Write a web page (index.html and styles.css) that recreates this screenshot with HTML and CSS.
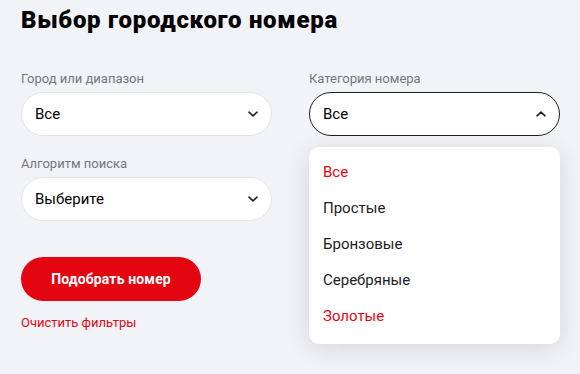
FILE: index.html
```html
<!DOCTYPE html>
<html lang="ru">
<head>
<meta charset="utf-8">
<link rel="stylesheet" href="styles.css">
</head>
<body>
<main class="page">
  <h1 class="title">Выбор городского номера</h1>
  <div class="grid">
    <div class="col">
      <div class="field">
        <div class="label">Город или диапазон</div>
        <div class="select">
          <span>Все</span>
          <svg class="chev" width="10" height="6" viewBox="0 0 10 6"><path d="M1 1.2l4 3.6 4-3.6" fill="none" stroke="#1d2023" stroke-width="1.6" stroke-linecap="round" stroke-linejoin="round"/></svg>
        </div>
      </div>
      <div class="field">
        <div class="label">Алгоритм поиска</div>
        <div class="select">
          <span>Выберите</span>
          <svg class="chev" width="10" height="6" viewBox="0 0 10 6"><path d="M1 1.2l4 3.6 4-3.6" fill="none" stroke="#1d2023" stroke-width="1.6" stroke-linecap="round" stroke-linejoin="round"/></svg>
        </div>
      </div>
      <button class="btn">Подобрать номер</button>
      <a class="clear">Очистить фильтры</a>
    </div>
    <div class="col">
      <div class="field dd-wrap">
        <div class="label">Категория номера</div>
        <div class="select open">
          <span>Все</span>
          <svg class="chev" width="10" height="6" viewBox="0 0 10 6"><path d="M1 4.8l4-3.6 4 3.6" fill="none" stroke="#1d2023" stroke-width="1.6" stroke-linecap="round" stroke-linejoin="round"/></svg>
        </div>
        <ul class="menu">
          <li class="item red">Все</li>
          <li class="item">Простые</li>
          <li class="item">Бронзовые</li>
          <li class="item">Серебряные</li>
          <li class="item red">Золотые</li>
        </ul>
      </div>
    </div>
  </div>
</main>
</body>
</html>
```

FILE: styles.css
```css
* { box-sizing: border-box; }
html, body {
  margin: 0;
  padding: 0;
  background: #f2f3f7;
  font-family: Roboto, "Liberation Sans", sans-serif;
  color: #1d2023;
}
.page {
  width: 580px;
  height: 374px;
  padding: 6px 20px 0 21px;
  overflow: hidden;
}
.title {
  margin: 0;
  font-size: 24px;
  line-height: 28px;
  font-weight: 900;
  letter-spacing: 0.7px;
  color: #000;
}
.grid {
  display: grid;
  grid-template-columns: 1fr 1fr;
  column-gap: 37px;
  margin-top: 36px;
}
.col {
  display: flex;
  flex-direction: column;
  align-items: flex-start;
}
.field {
  width: 100%;
  margin-bottom: 19px;
}
.label {
  font-size: 13px;
  line-height: 16px;
  color: #74767d;
  margin-top: 1px;
  margin-bottom: 5px;
}
.select {
  height: 44px;
  background: #fff;
  border: 1px solid #e3e5ea;
  border-radius: 22px;
  display: flex;
  align-items: center;
  justify-content: space-between;
  padding: 0 13px;
  font-size: 15px;
  color: #000;
}
.select.open {
  border-color: #1d2023;
}
.chev {
  display: block;
}
.btn {
  margin-top: 17px;
  width: 180px;
  height: 44px;
  border: none;
  border-radius: 22px;
  background: #e30611;
  color: #fff;
  font-family: Roboto, "Liberation Sans", sans-serif;
  font-size: 14px;
  font-weight: 700;
  letter-spacing: 0.15px;
  cursor: pointer;
}
.clear {
  margin-top: 14px;
  font-size: 13px;
  line-height: 16px;
  color: #e30611;
}
.dd-wrap {
  position: relative;
}
.menu {
  position: absolute;
  left: 0;
  right: 0;
  top: 77px;
  margin: 0;
  padding: 7px 0 10px;
  list-style: none;
  background: #fff;
  border-radius: 10px;
  box-shadow: 0 4px 24px rgba(0, 0, 0, 0.12);
}
.item {
  height: 36px;
  line-height: 36px;
  padding-left: 14px;
  font-size: 15px;
  color: #1d2023;
}
.item.red {
  color: #e30611;
}
```
